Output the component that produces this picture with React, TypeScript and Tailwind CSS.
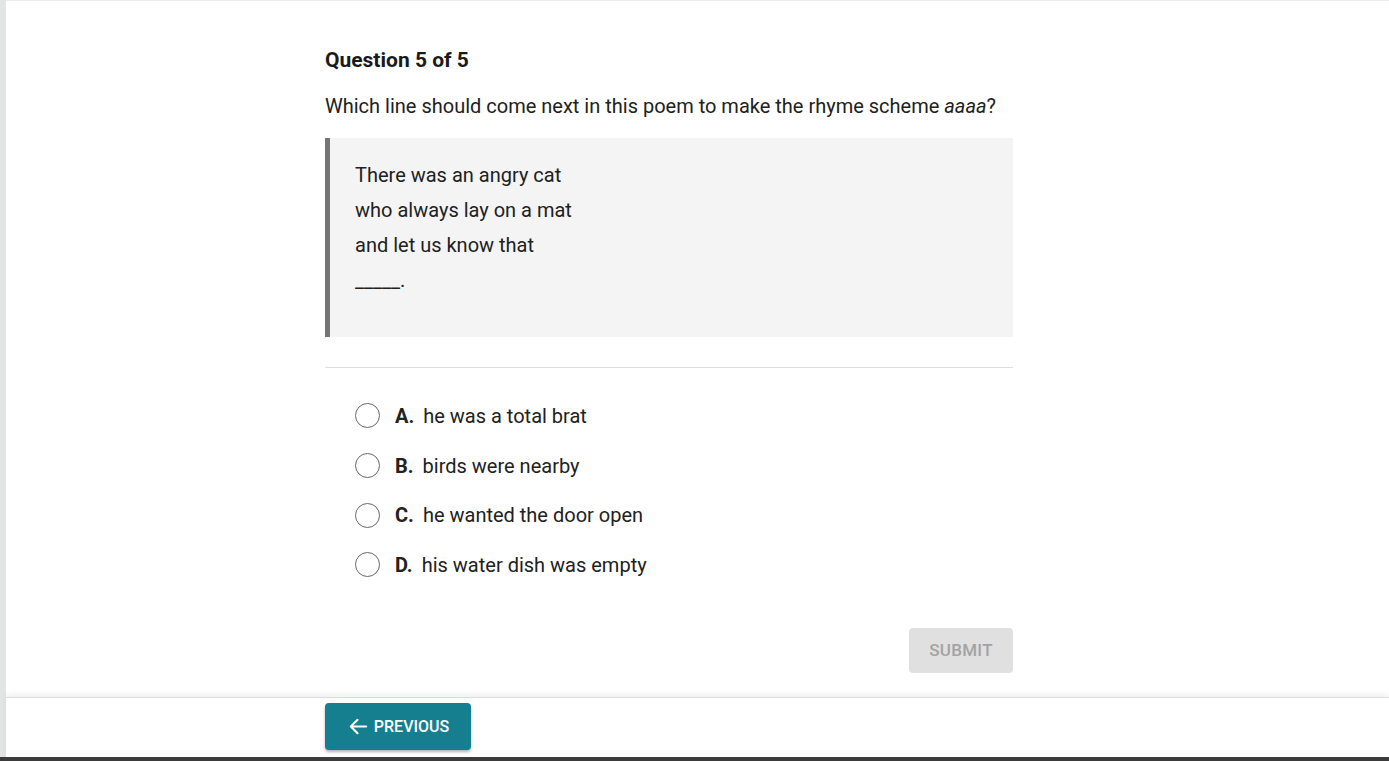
import React from "react";

const options = [
  { letter: "A.", text: "he was a total brat" },
  { letter: "B.", text: "birds were nearby" },
  { letter: "C.", text: "he wanted the door open" },
  { letter: "D.", text: "his water dish was empty" },
];

export default function App() {
  return (
    <div
      className="flex h-[761px] w-[1389px] flex-col overflow-hidden bg-white text-[#212121]"
      style={{ fontFamily: "Roboto, 'Noto Sans', sans-serif" }}
    >
      <div className="flex min-h-0 flex-1">
        <div className="w-[6px] shrink-0 bg-[#e2e5e4]" />
        <div className="flex min-w-0 flex-1 flex-col">
          <div className="h-px bg-[#ececec]" />
          <main className="flex-1 pl-[319px]">
            <div className="w-[688px] pt-[45px]">
              <h1 className="text-[21px] font-bold leading-[28px] text-[#1a1a1a]">Question 5 of 5</h1>
              <p className="mt-[19px] text-[20px] leading-[27px]">
                Which line should come next in this poem to make the rhyme scheme <em>aaaa</em>?
              </p>
              <blockquote className="mt-[18px] h-[199px] border-l-[5px] border-[#757575] bg-[#f4f4f4] pl-[25px] pt-[20px] text-[20px] leading-[35px]">
                <div>There was an angry cat</div>
                <div>who always lay on a mat</div>
                <div>and let us know that</div>
                <div>_____.</div>
              </blockquote>
              <div className="mt-[30px] h-px bg-[#dedede]" />
              <div className="mt-[23px] flex flex-col pl-[30px]">
                {options.map((o) => (
                  <label key={o.letter} className="flex h-[49.7px] items-center">
                    <span className="h-[25px] w-[25px] shrink-0 rounded-full border-[1.5px] border-[#686868] bg-white" />
                    <span className="ml-[15px] text-[20px] font-bold">{o.letter}</span>
                    <span className="ml-[9px] text-[20px]">{o.text}</span>
                  </label>
                ))}
              </div>
              <div className="mt-[38px] flex justify-end">
                <button className="h-[45px] w-[104px] rounded-[4px] bg-[#e0e0e0] text-[17px] font-medium tracking-[0.3px] text-[#a3a3a3]">
                  SUBMIT
                </button>
              </div>
            </div>
          </main>
          <footer className="h-[60px] shrink-0 border-t border-[#dcdcdc] pl-[319px] pt-[5px] shadow-[0_-3px_6px_rgba(0,0,0,0.06)]">
            <button className="flex h-[47px] w-[146px] items-center justify-center gap-[4px] rounded-[4px] bg-[#157f8f] text-[16px] font-medium text-white shadow-[0_2px_3px_rgba(0,0,0,0.3)]">
              <svg width="23" height="23" viewBox="0 0 24 24" fill="none" stroke="white" strokeWidth="2.2" strokeLinecap="round" strokeLinejoin="round">
                <path d="M20 12H5" />
                <path d="M11 5l-7 7 7 7" />
              </svg>
              PREVIOUS
            </button>
          </footer>
        </div>
      </div>
      <div className="h-[4px] shrink-0 bg-[#3b3b3b]" />
    </div>
  );
}
